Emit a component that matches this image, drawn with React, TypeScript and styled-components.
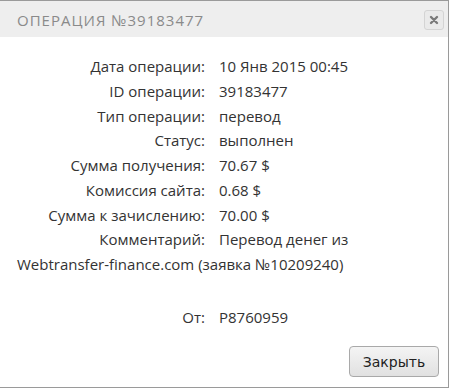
import React from "react";
import styled, { createGlobalStyle } from "styled-components";

const Global = createGlobalStyle`
  html, body { margin: 0; padding: 0; background: #ffffff; }
  body { width: 451px; height: 389px; overflow: hidden; }
`;

const Dialog = styled.div`
  box-sizing: border-box;
  width: 449px;
  height: 388px;
  border-top: 1px solid #9a9a9a;
  border-right: 1px solid #9a9a9a;
  border-bottom: 1px solid #9a9a9a;
  background: #ffffff;
  display: flex;
  flex-direction: column;
`;

const Header = styled.div`
  height: 36px;
  background: #eeeeee;
  display: flex;
  align-items: center;
  justify-content: space-between;
  padding: 0 4px 0 17px;
`;

const Title = styled.div`
  font-family: "Open Sans", sans-serif;
  font-size: 15px;
  letter-spacing: 1px;
  color: #8a8a8a;
  text-transform: uppercase;
  padding-top: 1px;
`;

const CloseBtn = styled.div`
  box-sizing: border-box;
  width: 20px;
  height: 20px;
  border: 1px solid #d4d4d4;
  border-radius: 3px;
  background: #eaeaea;
  display: flex;
  align-items: center;
  justify-content: center;
  margin-top: 2px;
`;

const Body = styled.div`
  flex: 1;
  padding: 17px 12px 0 17px;
  font-family: "Open Sans", sans-serif;
  font-size: 15px;
  line-height: 24.75px;
  color: #333333;
`;

const Row = styled.div<{ $gap?: number }>`
  margin-top: ${(p) => p.$gap ?? 0}px;
`;

const Label = styled.span`
  display: inline-block;
  width: 188px;
  text-align: right;
  margin-right: 14px;
`;

const NoBreak = styled.span`
  white-space: nowrap;
`;

const Footer = styled.div`
  display: flex;
  justify-content: flex-end;
  padding: 0 9px 10px 0;
`;

const Button = styled.button`
  box-sizing: border-box;
  width: 90px;
  height: 31px;
  border: 1px solid #a9a9a9;
  border-radius: 4px;
  background: linear-gradient(#f4f4f4, #e1e1e1);
  font-family: "DejaVu Sans", Tahoma, sans-serif;
  font-size: 14px;
  color: #222222;
  padding: 0;
`;

const rows: [string, React.ReactNode][] = [
  ["Дата операции:", "10 Янв 2015 00:45"],
  ["ID операции:", "39183477"],
  ["Тип операции:", "перевод"],
  ["Статус:", "выполнен"],
  ["Сумма получения:", "70.67 $"],
  ["Комиссия сайта:", "0.68 $"],
  ["Сумма к зачислению:", "70.00 $"],
  [
    "Комментарий:",
    <>
      Перевод денег из <NoBreak>Webtransfer-finance.com</NoBreak> (заявка №10209240)
    </>,
  ],
];

export default function App() {
  return (
    <>
      <Global />
      <Dialog>
        <Header>
          <Title>Операция №39183477</Title>
          <CloseBtn>
            <svg width="10" height="10" viewBox="0 0 10 10">
              <path d="M2 2 L8 8 M8 2 L2 8" stroke="#7a7a7a" strokeWidth="2.4" strokeLinecap="round" />
            </svg>
          </CloseBtn>
        </Header>
        <Body>
          {rows.map(([l, v]) => (
            <Row key={l}>
              <Label>{l}</Label>
              {v}
            </Row>
          ))}
          <Row $gap={28}>
            <Label>От:</Label>
            P8760959
          </Row>
        </Body>
        <Footer>
          <Button>Закрыть</Button>
        </Footer>
      </Dialog>
    </>
  );
}
